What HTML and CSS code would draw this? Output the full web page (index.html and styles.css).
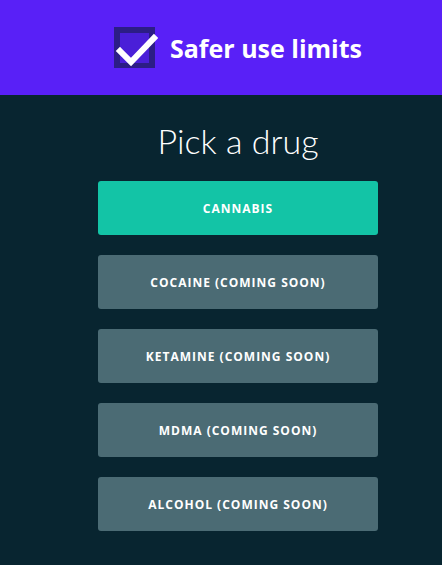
FILE: index.html
```html
<!DOCTYPE html>
<html lang="en">

<head>
  <meta charset="UTF-8">
  <meta name="viewport" content="width=device-width, initial-scale=1.0">
  <title>Safer use limits</title>
  <link rel="stylesheet" href="styles.css">
</head>

<body>
  <header class="top-bar">
    <div class="logo">
      <svg class="logo-icon" width="44" height="44" viewBox="0 0 44 44">
        <rect x="3" y="6" width="35" height="36" fill="#4a1fd8" stroke="#2c1d86" stroke-width="6" />
        <path d="M6 27 L17 38 L40 14" fill="none" stroke="#fff" stroke-width="6" stroke-linecap="square" />
      </svg>
      <span class="logo-text">Safer use limits</span>
    </div>
  </header>

  <main class="picker">
    <h1>Pick a drug</h1>
    <div class="drug-list">
      <button class="drug active">Cannabis</button>
      <button class="drug" disabled>Cocaine (coming soon)</button>
      <button class="drug" disabled>Ketamine (coming soon)</button>
      <button class="drug" disabled>MDMA (coming soon)</button>
      <button class="drug" disabled>Alcohol (coming soon)</button>
    </div>
  </main>
</body>

</html>
```

FILE: styles.css
```css
body {
  margin: 0;
  background: #082530;
  color: white;
  font-family: "Open Sans", Arial, sans-serif;
  min-height: 100vh;
}

.top-bar {
  background: #5920f7;
  height: 95px;
  padding-left: 34px;
  display: flex;
  justify-content: center;
  align-items: center;
}

.logo {
  display: flex;
  align-items: center;
  gap: 12px;
}

.logo-icon {
  display: block;
  margin-top: -4px;
}

.logo-text {
  font-size: 25px;
  font-weight: 700;
}

.picker {
  display: flex;
  flex-direction: column;
  align-items: center;
  padding-left: 34px;
}

h1 {
  font-family: Lato, "Open Sans", sans-serif;
  font-weight: 300;
  font-size: 34px;
  margin: 24px 0 18px;
  line-height: 44px;
}

.drug-list {
  display: flex;
  flex-direction: column;
  gap: 20px;
  width: 280px;
}

.drug {
  height: 54px;
  border: none;
  border-radius: 3px;
  background: #4b6b74;
  color: white;
  font-family: "Open Sans", Arial, sans-serif;
  font-size: 12px;
  font-weight: 700;
  text-transform: uppercase;
  letter-spacing: 1px;
}

.drug.active {
  background: #13c4a6;
  cursor: pointer;
}
```
